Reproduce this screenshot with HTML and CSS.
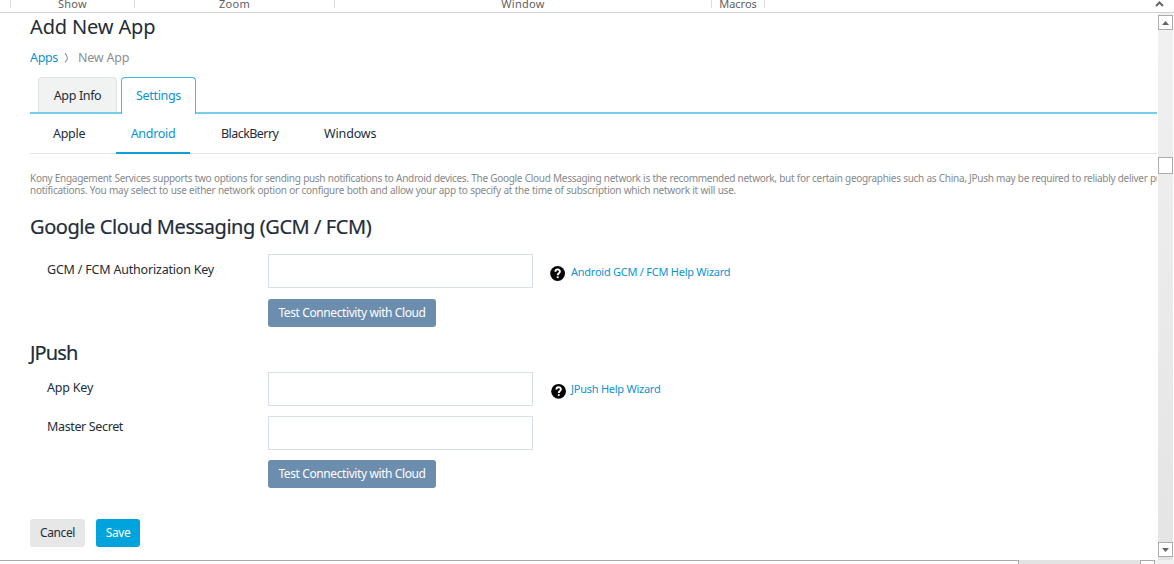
FILE: index.html
```
<!DOCTYPE html>
<html lang="en">
<head>
<meta charset="utf-8">
<title>Add New App</title>
<link rel="stylesheet" href="styles.css">
</head>
<body>
<header class="ribbon">
  <span class="group show">Show</span>
  <span class="group zoom">Zoom</span>
  <span class="group window">Window</span>
  <span class="group macros">Macros</span>
  <svg class="collapse" viewBox="0 0 9 6" width="9" height="6"><path d="M1 5 L4.5 1.5 L8 5" fill="none" stroke="#666" stroke-width="2"/></svg>
</header>
<div class="workspace">
  <main class="page">
    <h1 class="title">Add New App</h1>
    <nav class="crumbs"><a>Apps</a><svg class="chevron" width="5" height="12" viewBox="0 0 5 12"><path d="M1 1.5 Q3.4 3.8 3.4 6 Q3.4 8.2 1 10.5" fill="none" stroke="#8b8f92" stroke-width="1.1"/></svg><span>New App</span></nav>
    <nav class="tabs"><a class="tab info">App Info</a><a class="tab settings">Settings</a></nav>
    <nav class="subtabs"><a class="apple">Apple</a><a class="android">Android</a><a class="blackberry">BlackBerry</a><a class="windows">Windows</a></nav>
    <p class="intro"><span class="first-line">Kony Engagement Services supports two options for sending push notifications to Android devices. The Google Cloud Messaging network is the recommended network, but for certain geographies such as China, JPush may be required to reliably deliver push</span><br>notifications. You may select to use either network option or configure both and allow your app to specify at the time of subscription which network it will use.</p>
    <h2 class="heading gcm">Google Cloud Messaging (GCM / FCM)</h2>
    <div class="row"><label class="label">GCM / FCM Authorization Key</label><input class="field">
      <a class="help"><svg class="help-icon" width="16" height="16" viewBox="0 0 16 16"><circle cx="7.6" cy="8.5" r="7.4" fill="#050505"/><path d="M5.4 6.7 C5.4 3.7 9.9 3.7 9.9 6.5 C9.9 8.3 7.7 8.2 7.7 10.2" fill="none" stroke="#fff" stroke-width="1.9"/><rect x="6.8" y="11.3" width="1.8" height="1.8" fill="#fff"/></svg>Android GCM / FCM Help Wizard</a></div>
    <button class="button test">Test Connectivity with Cloud</button>
    <h2 class="heading jpush">JPush</h2>
    <div class="row"><label class="label">App Key</label><input class="field">
      <a class="help second"><svg class="help-icon" width="16" height="16" viewBox="0 0 16 16"><circle cx="7.6" cy="8.3" r="7.4" fill="#050505"/><path d="M5.4 6.5 C5.4 3.5 9.9 3.5 9.9 6.3 C9.9 8.1 7.7 8 7.7 10" fill="none" stroke="#fff" stroke-width="1.9"/><rect x="6.8" y="11.1" width="1.8" height="1.8" fill="#fff"/></svg>JPush Help Wizard</a></div>
    <div class="row master"><label class="label secret">Master Secret</label><input class="field"></div>
    <button class="button test lower">Test Connectivity with Cloud</button>
    <div class="actions"><button class="button cancel">Cancel</button><button class="button save">Save</button></div>
  </main>
  <aside class="scroll"><span class="arrow"><svg width="7" height="4" viewBox="0 0 7 4"><path d="M0 4 L3.5 0 L7 4Z" fill="#666"/></svg></span><span class="thumb"></span><span class="arrow down"><svg width="7" height="4" viewBox="0 0 7 4"><path d="M0 0 H7 L3.5 4Z" fill="#666"/></svg></span></aside>
</div>
<footer class="hscroll"><span class="hthumb"></span><span class="htrack"></span><span class="hend"></span></footer>
</body>
</html>
```
FILE: styles.css
```
* { box-sizing: border-box; }
body { margin: 0; width: 1174px; height: 564px; overflow: hidden; background: #fff; color: #222d38; font: 12.5px/18px "Noto Sans", sans-serif; }
.ribbon { display: flex; height: 13px; border-bottom: 1px solid #d2d2d2; color: #5f5f5f; font-size: 11px; line-height: 8px; letter-spacing: .3px; }
.group { height: 8px; border-right: 1px solid #dcdcdc; text-align: center; }
.show { margin-left: 10px; width: 125px; border-left: 1px solid #dcdcdc; }
.zoom { width: 200px; }
.window { width: 377px; }
.macros { width: 53px; letter-spacing: 0; }
.collapse { margin: 1px 0 0 390px; }
.workspace { display: flex; height: 547px; }
.page { width: 1157px; padding-left: 30px; overflow: hidden; display: flex; flex-direction: column; align-items: flex-start; white-space: nowrap; }
.title, .heading { margin: 0; height: 26px; font-size: 20px; line-height: 28px; font-weight: 400; letter-spacing: -.14px; }
.heading { letter-spacing: -.43px; -webkit-text-stroke: .2px #222d38; }
.crumbs { display: flex; margin-top: 9px; height: 18px; line-height: 19px; color: #8b8f92; letter-spacing: -.2px; }
.crumbs a, .help { color: #0d93d2; }
.crumbs a { letter-spacing: -.35px; }
.chevron { margin: 4px 9px 0 6px; }
.tabs { display: flex; gap: 4px; margin-top: 11px; width: 100%; height: 37px; padding-left: 8px; border-bottom: 2px solid #74cdea; }
.tab { height: 35px; border: 1px solid #e0e3e4; border-bottom: 0; border-radius: 4px 4px 0 0; line-height: 35px; text-align: center; letter-spacing: -.35px; }
.info { width: 79px; background: #f1f2f2; }
.settings { width: 75px; height: 37px; border-color: #3dbbe3; background: #fff; color: #0d93d2; }
.subtabs { display: flex; width: 100%; height: 40px; line-height: 39px; border-bottom: 1px solid #e2e4e5; letter-spacing: -.3px; }
.apple { margin-left: 23px; width: 63px; }
.android { width: 74px; height: 40px; border-bottom: 2px solid #129fd8; text-align: center; color: #0d93d2; }
.blackberry { margin-left: 31px; width: 103px; letter-spacing: -.55px; }
.windows { letter-spacing: -.15px; }
.intro { margin: 18px 0 0; font-size: 10px; line-height: 12.3px; color: #86898c; letter-spacing: -.25px; word-spacing: .2px; }
.first-line { letter-spacing: -.3px; word-spacing: .24px; }
.gcm { margin-top: 16px; }
.row { display: flex; align-items: flex-start; margin-top: 15px; height: 34px; }
.label { width: 238px; padding: 7px 0 0 17px; letter-spacing: -.2px; }
.secret { padding-top: 2px; letter-spacing: -.36px; }
.field { width: 265px; height: 34px; border: 1px solid #d9dfe7; background: #fff; padding: 0 8px; }
.help { display: flex; margin: 9px 0 0 17px; font-size: 11px; letter-spacing: -.25px; }
.second { margin: 8px 0 0 18px; }
.help-icon { margin: 2px 5px 0 0; }
.second .help-icon { margin: 3px 4px 0 0; }
.button { border: 0; border-radius: 3px; height: 28px; padding: 0; font: inherit; font-size: 12px; line-height: 27px; text-align: center; letter-spacing: -.4px; }
.test { margin: 11px 0 0 238px; width: 168px; background: #6c8dae; color: #fff; }
.lower { margin-top: 10px; }
.jpush { margin-top: 12px; letter-spacing: -.9px; }
.jpush + .row { margin-top: 7px; }
.master { margin-top: 10px; }
.actions { display: flex; gap: 11px; margin-top: 31px; }
.cancel { width: 55px; background: #e7e7e7; color: #222d38; }
.save { width: 44px; background: #00a3dc; color: #fff; }
.scroll { margin-left: 1px; width: 15px; background: linear-gradient(#f1f1f1, #e4e4e4); display: flex; flex-direction: column; }
.arrow { display: flex; align-items: center; justify-content: center; margin-top: 2px; width: 15px; height: 15px; border: 1px solid #ababab; background: #fff; }
.thumb { margin-top: 127px; height: 17px; border: 1px solid #ababab; background: #fff; }
.down { margin-top: 368px; }
.hscroll { display: flex; height: 4px; background: #f1f1f1; }
.hthumb { width: 1019px; border-top: 1px solid #aaa; border-right: 1px solid #aaa; background: #fff; }
.htrack { width: 121px; background: #e3e3e3; }
.hend { width: 15px; border: 1px solid #aaa; border-bottom: 0; background: #fff; }
```
